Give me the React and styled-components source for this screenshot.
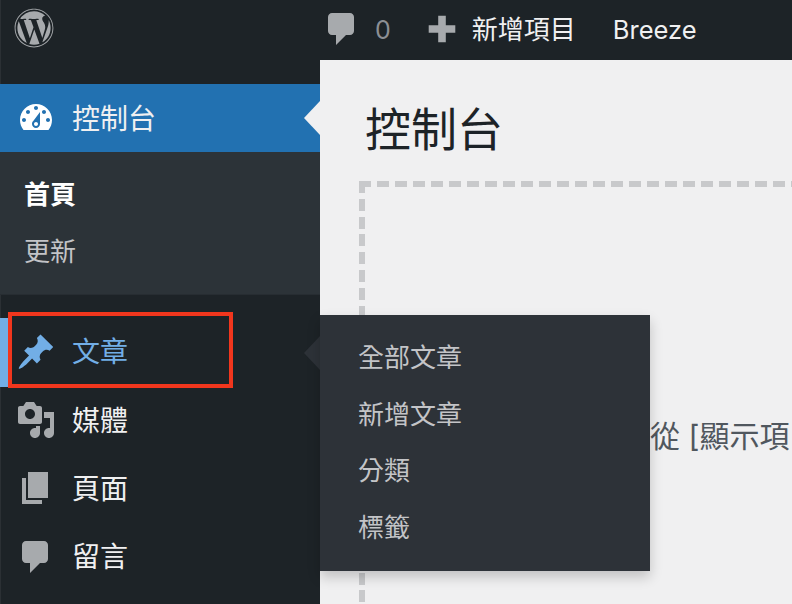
import React from "react";
import styled, { createGlobalStyle } from "styled-components";
import { FaWordpress } from "react-icons/fa";

const CJK = `Inter, "Noto Sans CJK TC", sans-serif`;

const Global = createGlobalStyle`
  html, body { margin: 0; padding: 0; background: #f0f0f1; }
  body { font-family: ${CJK}; }
`;

const Page = styled.div`
  position: relative;
  width: 792px;
  height: 604px;
  overflow: hidden;
  background: #f0f0f1;
`;
const TopBar = styled.header`
  display: flex;
  align-items: center;
  height: 60px;
  background: #1d2327;
  box-shadow: inset 1px 0 0 #2b3034;
  color: #f0f0f1;
  font-size: 26px;
  line-height: 58px;
`;
const LogoSlot = styled.div`
  display: flex;
  width: 322px;
  padding-left: 14px;
  box-sizing: border-box;
  color: #a7aaad;
  margin-top: -4px;
`;
const BarIcon = styled.span`
  display: flex;
  width: ${(p) => p.$size}px;
  height: ${(p) => p.$size}px;
  margin-top: -2px;
  color: #a7aaad;
`;
const BarGroup = styled.div`
  display: flex;
  align-items: center;
  margin-right: ${(p) => p.$gap}px;
`;
const BarCount = styled.span`
  color: #8c8f94;
  margin-left: 13px;
  font-size: 25px;
`;
const BarLabel = styled.span`
  margin-left: ${(p) => p.$gap || 0}px;
  white-space: nowrap;
  font-size: ${(p) => p.$size || 26}px;
`;
const Body = styled.div`
  display: flex;
  height: 544px;
`;
const Sidebar = styled.nav`
  flex: 0 0 320px;
  background: #1d2327;
  box-shadow: inset 1px 0 0 #2b3034;
  padding-top: 24px;
  box-sizing: border-box;
`;
const MenuRow = styled.div`
  position: relative;
  display: flex;
  align-items: center;
  height: ${(p) => (p.$active ? 68 : p.$current ? 69 : 68.3)}px;
  padding: 0 0 ${(p) => (p.$active ? 3 : 5)}px ${(p) => (p.$current ? 8 : 16)}px;
  box-sizing: border-box;
  font-size: 28px;
  color: ${(p) => (p.$current ? "#72aee6" : "#f0f0f1")};
  background: ${(p) => (p.$active ? "#2271b1" : "transparent")};
  border-left: ${(p) => (p.$current ? "8px solid #72aee6" : "none")};
`;
const IconBox = styled.span`
  display: flex;
  width: 40px;
  height: 40px;
  margin: 3px 16px 0 0;
  color: ${(p) => p.$color || "#a7aaad"};
`;
const Notch = styled.span`
  position: absolute;
  right: 0;
  top: 50%;
  margin-top: -17px;
  border: 17px solid transparent;
  border-left-width: 0;
  border-right: 16px solid ${(p) => p.$color};
`;
const SubMenu = styled.div`
  background: #2c3338;
  border-bottom: 1px solid #272d32;
  margin-bottom: 23px;
  padding-top: 15px;
  height: 127px;
`;
const SubItem = styled.div`
  height: 57px;
  line-height: 56px;
  padding-left: 24px;
  font-size: 26px;
  font-weight: ${(p) => (p.$bold ? 700 : 400)};
  color: ${(p) => (p.$bold ? "#fff" : "#c3c4c7")};
`;
const Main = styled.main`
  flex: 1;
  min-width: 0;
  overflow: hidden;
  padding: 0 0 0 39px;
`;
const Title = styled.h1`
  margin: 33px 0 0 6px;
  font-size: 46px;
  line-height: 72px;
  font-weight: 400;
  color: #1d2327;
`;
const DropZone = styled.div`
  width: 900px;
  height: 800px;
  margin-top: 16px;
  padding: 229px 0 0 291px;
  box-sizing: border-box;
  background:
    repeating-linear-gradient(90deg, #c8c9cb 0 12px, transparent 12px 18px) 0 0 / 100% 6px no-repeat,
    repeating-linear-gradient(180deg, #c8c9cb 0 12px, transparent 12px 17.8px) 0 0 / 6px 100% no-repeat;
`;
const Hint = styled.p`
  margin: 0;
  font-size: 30px;
  line-height: 52px;
  color: #50575e;
  white-space: nowrap;
`;
const Flyout = styled.div`
  position: absolute;
  left: 320px;
  top: 315px;
  width: 330px;
  height: 256px;
  padding-top: 15px;
  box-sizing: border-box;
  background: #2d3238;
  box-shadow: 0 6px 12px rgba(0, 0, 0, 0.2);
`;
const FlyItem = styled.div`
  height: 56.6px;
  line-height: 56px;
  padding-left: 38px;
  font-size: 26px;
  color: #c3c4c7;
`;
const Highlight = styled.div`
  position: absolute;
  left: 8px;
  top: 312px;
  width: 225px;
  height: 76px;
  box-sizing: border-box;
  border: 4px solid #f1361d;
`;

const Dash = ({ d, size = 40 }) => (
  <svg viewBox="0 0 20 20" width={size} height={size} fill="currentColor" aria-hidden="true">
    <path d={d} />
  </svg>
);

const ICONS = {
  dashboard:
    "M3.76 16h12.48c1.1-1.37 1.76-3.11 1.76-5 0-4.42-3.58-8-8-8s-8 3.58-8 8c0 1.89.66 3.63 1.76 5zM10 4c.55 0 1 .45 1 1s-.45 1-1 1-1-.45-1-1 .45-1 1-1zM6 6c.55 0 1 .45 1 1s-.45 1-1 1-1-.45-1-1 .45-1 1-1zm8 0c.55 0 1 .45 1 1s-.45 1-1 1-1-.45-1-1 .45-1 1-1zm-5.37 5.55L12 7v6c0 1.1-.9 2-2 2s-2-.9-2-2c0-.57.24-1.08.63-1.45zM4 10c.55 0 1 .45 1 1s-.45 1-1 1-1-.45-1-1 .45-1 1-1zm12 0c.55 0 1 .45 1 1s-.45 1-1 1-1-.45-1-1 .45-1 1-1zm-5 3c0-.55-.45-1-1-1s-1 .45-1 1 .45 1 1 1 1-.45 1-1z",
  pin: "M10.44 3.02l1.82-1.82 6.36 6.35-1.83 1.82c-1.05-.68-2.48-.57-3.41.36l-.75.75c-.92.93-1.04 2.35-.35 3.41l-1.83 1.82-2.41-2.41-2.8 2.79c-.42.42-3.38 2.71-3.8 2.29s1.86-3.39 2.28-3.81l2.79-2.79L4.1 9.36l1.83-1.82c1.05.69 2.48.57 3.4-.36l.75-.75c.93-.92 1.05-2.35.36-3.41z",
  media:
    "M13 11V4c0-.55-.45-1-1-1h-1.67L9 1H5L3.67 3H2c-.55 0-1 .45-1 1v7c0 .55.45 1 1 1h10c.55 0 1-.45 1-1zM7 4.5c1.38 0 2.5 1.12 2.5 2.5S8.38 9.5 7 9.5 4.5 8.38 4.5 7 5.62 4.5 7 4.5zM14 6h5v10.5c0 1.38-1.12 2.5-2.5 2.5S14 17.88 14 16.5s1.12-2.5 2.5-2.5c.17 0 .34.02.5.05V9h-3V6zm-4 8.05V13h2v3.5c0 1.38-1.12 2.5-2.5 2.5S7 17.88 7 16.5 8.12 14 9.5 14c.17 0 .34.02.5.05z",
  page: "M6 15V2h10v13H6zm-1 1h8v2H3V5h2v11z",
  comment: "M5 2h9c1.1 0 2 .9 2 2v7c0 1.1-.9 2-2 2h-2l-5 5v-5H5c-1.1 0-2-.9-2-2V4c0-1.1.9-2 2-2z",
  plus: "M12 8h5v4h-5v5H8v-5H3V8h5V3h4z",
};

export default function App() {
  return (
    <Page>
      <Global />
      <TopBar>
        <LogoSlot>
          <FaWordpress size={40} />
        </LogoSlot>
        <BarGroup $gap={32}>
          <BarIcon $size={40}><Dash d={ICONS.comment} /></BarIcon>
          <BarCount>0</BarCount>
        </BarGroup>
        <BarGroup $gap={37}>
          <BarIcon $size={38}><Dash d={ICONS.plus} size={38} /></BarIcon>
          <BarLabel $gap={11}>新增項目</BarLabel>
        </BarGroup>
        <BarLabel $size={25.5}>Breeze</BarLabel>
      </TopBar>
      <Body>
        <Sidebar>
          <MenuRow $active>
            <IconBox $color="#fff"><Dash d={ICONS.dashboard} /></IconBox>
            控制台
            <Notch $color="#f0f0f1" />
          </MenuRow>
          <SubMenu>
            <SubItem $bold>首頁</SubItem>
            <SubItem>更新</SubItem>
          </SubMenu>
          <MenuRow $current>
            <IconBox $color="#72aee6"><Dash d={ICONS.pin} /></IconBox>
            文章
            <Notch $color="#2d3238" />
          </MenuRow>
          <MenuRow>
            <IconBox><Dash d={ICONS.media} /></IconBox>
            媒體
          </MenuRow>
          <MenuRow>
            <IconBox><Dash d={ICONS.page} /></IconBox>
            頁面
          </MenuRow>
          <MenuRow>
            <IconBox><Dash d={ICONS.comment} /></IconBox>
            留言
          </MenuRow>
        </Sidebar>
        <Main>
          <Title>控制台</Title>
          <DropZone>
            <Hint>從 [顯示項</Hint>
          </DropZone>
        </Main>
      </Body>
      <Flyout>
        <FlyItem>全部文章</FlyItem>
        <FlyItem>新增文章</FlyItem>
        <FlyItem>分類</FlyItem>
        <FlyItem>標籤</FlyItem>
      </Flyout>
      <Highlight />
    </Page>
  );
}
